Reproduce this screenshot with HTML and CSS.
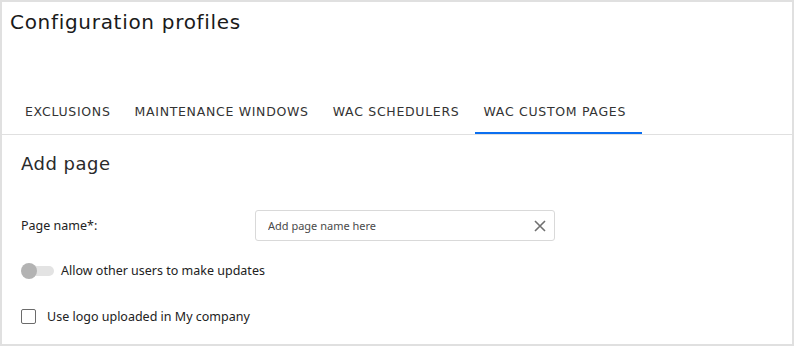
FILE: index.html
```html
<!DOCTYPE html>
<html lang="en">
<head>
    <meta charset="UTF-8">
    <title>Configuration profiles</title>
    <link rel="stylesheet" href="styles.css">
</head>
<body>
    <div class="page">
        <h1 class="title">Configuration profiles</h1>
        <div class="tabs">
            <div class="tab">EXCLUSIONS</div>
            <div class="tab">MAINTENANCE WINDOWS</div>
            <div class="tab">WAC SCHEDULERS</div>
            <div class="tab active">WAC CUSTOM PAGES</div>
        </div>
        <div class="content">
            <h2 class="section-title">Add page</h2>
            <div class="field">
                <label class="field-label">Page name*:</label>
                <div class="input-box">
                    <input type="text" placeholder="Add page name here">
                    <svg class="clear-icon" width="12" height="12" viewBox="0 0 12 12">
                        <path d="M1 1 L11 11 M11 1 L1 11" stroke="#707070" stroke-width="1.6" fill="none"/>
                    </svg>
                </div>
            </div>
            <div class="toggle-row">
                <span class="toggle"><span class="knob"></span></span>
                <span class="option-text">Allow other users to make updates</span>
            </div>
            <div class="check-row">
                <span class="checkbox"></span>
                <span class="option-text">Use logo uploaded in My company</span>
            </div>
        </div>
    </div>
</body>
</html>
```

FILE: styles.css
```css
body {
    margin: 0;
    font-family: 'Noto Sans', sans-serif;
    color: #1f1f1f;
    background: #fff;
}
.page {
    height: 346px;
    box-sizing: border-box;
    border: 2px solid #e0e0e0;
}
.title {
    margin: 0;
    padding: 8px 0 0 8px;
    font-family: 'DejaVu Sans', sans-serif;
    font-weight: normal;
    font-size: 20px;
    letter-spacing: 0.7px;
    line-height: 24px;
    color: #1a1a1a;
}
.tabs {
    display: flex;
    margin-top: 53px;
    padding-left: 15px;
    border-bottom: 1px solid #e0e0e0;
}
.tab {
    padding: 0 16px 0 8px;
    height: 47px;
    line-height: 50px;
    font-family: 'DejaVu Sans', sans-serif;
    font-size: 12.5px;
    letter-spacing: 0.7px;
    color: #333;
    box-sizing: border-box;
}
.tab.active {
    border-bottom: 2px solid #0b6ff0;
    margin-bottom: -1px;
}
.content {
    padding: 0 19px;
}
.section-title {
    margin: 0;
    padding-top: 18px;
    font-family: 'DejaVu Sans', sans-serif;
    font-weight: normal;
    font-size: 18px;
    letter-spacing: 0.5px;
    line-height: 22px;
    color: #2a2a2a;
}
.field {
    display: flex;
    align-items: center;
    margin-top: 35px;
}
.field-label {
    width: 234px;
    font-size: 12.5px;
    color: #222;
}
.input-box {
    display: flex;
    align-items: center;
    width: 300px;
    height: 31px;
    box-sizing: border-box;
    border: 1px solid #d9d9d9;
    border-radius: 3px;
    padding: 0 8px 0 12px;
}
.input-box input {
    flex: 1;
    border: none;
    outline: none;
    font-family: 'Noto Sans', sans-serif;
    font-size: 11px;
    color: #222;
    padding: 0;
}
.input-box input::placeholder {
    color: #4a4a4a;
}
.clear-icon {
    margin-left: 8px;
}
.toggle-row, .check-row {
    display: flex;
    align-items: center;
}
.toggle-row {
    margin-top: 21px;
}
.check-row {
    margin-top: 29px;
}
.toggle {
    position: relative;
    width: 32px;
    height: 10px;
    margin-left: 1px;
    background: #e3e3e3;
    border-radius: 5px;
}
.knob {
    position: absolute;
    left: -1px;
    top: -3px;
    width: 16px;
    height: 16px;
    border-radius: 50%;
    background: #b3b3b3;
}
.toggle + .option-text {
    margin-left: 7px;
}
.checkbox {
    width: 13px;
    height: 13px;
    border: 1px solid #6b6b6b;
    border-radius: 2px;
}
.checkbox + .option-text {
    margin-left: 11px;
}
.option-text {
    font-size: 12.5px;
    color: #222;
}
```
